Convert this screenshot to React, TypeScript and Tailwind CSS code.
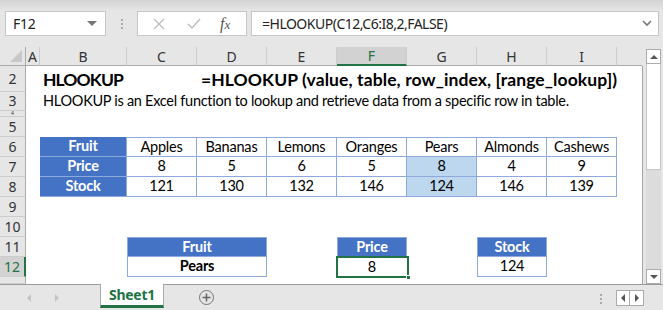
import React from "react";

const cal = "font-['Lato',sans-serif]";
const ui = "font-['Noto_Sans',sans-serif]";

type CellProps = {
  pos: string;
  kind?: "head" | "data" | "hl" | "bold";
  top?: boolean;
  left?: boolean;
  children?: React.ReactNode;
};

function Cell({ pos, kind = "data", top, left, children }: CellProps) {
  const tone =
    kind === "head"
      ? "bg-[#4472c4] text-white font-bold"
      : kind === "hl"
        ? "bg-[#bdd7ee] text-black"
        : kind === "bold"
          ? "bg-white text-black font-bold"
          : "bg-white text-black";
  return (
    <div
      className={`${pos} ${tone} ${top ? "border-t" : ""} ${left ? "border-l" : ""} flex items-center justify-center border-r border-b border-[#8ea9db] text-[14.5px] tracking-[-0.2px] leading-none ${cal}`}
    >
      {children}
    </div>
  );
}

function ColHead({ label, active, last }: { label: string; active?: boolean; last?: boolean }) {
  return (
    <div
      className={`flex items-center justify-center text-[14px] ${ui} ${last ? "" : "border-r border-r-[#cdcdcd]"} ${
        active
          ? "bg-[#d2d2d2] text-[#217346] border-b-2 border-b-[#217346]"
          : "bg-[#e6e6e6] text-[#333] border-b border-b-[#ababab]"
      }`}
    >
      {label}
    </div>
  );
}

function RowHead({ pos, label, active, size = "text-[14px] leading-none" }: { pos: string; label: string; active?: boolean; size?: string }) {
  return (
    <div
      className={`${pos} col-start-1 flex items-center justify-center overflow-hidden ${size} ${ui} border-b border-b-[#cdcdcd] ${
        active
          ? "bg-[#d2d2d2] text-[#217346] border-r-2 border-r-[#217346]"
          : "bg-[#e6e6e6] text-[#333] border-r border-r-[#ababab]"
      }`}
    >
      {label}
    </div>
  );
}

const fruits = ["Apples", "Bananas", "Lemons", "Oranges", "Pears", "Almonds", "Cashews"];
const prices = ["8", "5", "6", "5", "8", "4", "9"];
const stock = ["121", "130", "132", "146", "124", "146", "139"];
const colPos = ["col-start-4", "col-start-5", "col-start-6", "col-start-7", "col-start-8", "col-start-9", "col-start-10"];

export default function App() {
  return (
    <div className={`w-[663px] h-[310px] overflow-hidden bg-[#e6e6e6] flex flex-col ${ui}`}>
      {/* formula bar */}
      <div className="h-[47px] flex flex-col">
        <div className="h-[11px] bg-linear-to-b from-[#d3d3d3] to-[#e6e6e6]" />
        <div className="flex h-[25px] items-stretch">
          <div className="ml-[5px] w-[101px] bg-white border border-[#c6c6c6] flex items-center justify-between pl-[7px] pr-[8px]">
            <span className="text-[14px] tracking-[-0.3px] text-[#222]">F12</span>
            <span className="w-0 h-0 border-l-[5px] border-r-[5px] border-t-[5px] border-l-transparent border-r-transparent border-t-[#777]" />
          </div>
          <div className="w-[31px] flex flex-col items-center justify-center gap-[2px]">
            <span className="w-[2px] h-[2px] bg-[#aaa]" />
            <span className="w-[2px] h-[2px] bg-[#aaa]" />
            <span className="w-[2px] h-[2px] bg-[#aaa]" />
          </div>
          <div className="w-[110px] bg-white border border-[#c6c6c6] flex items-center">
            <svg width="12" height="12" viewBox="0 0 12 12" className="ml-[15px]">
              <path d="M1 1 L11 11 M11 1 L1 11" stroke="#bdbdbd" strokeWidth="1.3" fill="none" />
            </svg>
            <svg width="14" height="12" viewBox="0 0 14 12" className="ml-[22px]">
              <path d="M1 6 L5 10 L13 1" stroke="#bdbdbd" strokeWidth="1.5" fill="none" />
            </svg>
            <span className="ml-[19px] text-[16px] italic text-[#555] font-['Liberation_Serif',serif] leading-none">
              f<span className="text-[13px]">x</span>
            </span>
          </div>
          <div className="ml-[4px] w-[408px] bg-white border border-[#c6c6c6] flex items-center justify-between pl-[10px] pr-[6px]">
            <span className="text-[14px] tracking-[-0.5px] text-[#222]">=HLOOKUP(C12,C6:I8,2,FALSE)</span>
            <svg width="10" height="7" viewBox="0 0 10 7">
              <path d="M1 1 L5 5 L9 1" stroke="#777" strokeWidth="1.6" fill="none" />
            </svg>
          </div>
        </div>
      </div>

      {/* sheet */}
      <div className="flex h-[237px]">
        <div className="w-[643px] grid grid-cols-[26px_14px_87px_repeat(7,70px)_25px_1px] grid-rows-[19px_26px_19px_6px_20px_repeat(7,20px)_7px] bg-white">
          <div className="bg-[#e6e6e6] border-r border-b border-[#ababab] flex items-end justify-end p-[3px]">
            <span className="w-0 h-0 [border-bottom:12px_solid_#c8c8c8] [border-left:12px_solid_transparent]" />
          </div>
          <ColHead label="A" />
          <ColHead label="B" />
          <ColHead label="C" />
          <ColHead label="D" />
          <ColHead label="E" />
          <ColHead label="F" active />
          <ColHead label="G" />
          <ColHead label="H" />
          <ColHead label="I" />
          <ColHead label="" last />
          <div className="bg-[#e6e6e6]" />

          <RowHead pos="row-start-2" label="2" />
          <RowHead pos="row-start-3" label="3" />
          <RowHead pos="row-start-4" label="4" size="text-[5px] leading-[5px]" />
          <RowHead pos="row-start-5" label="5" />
          <RowHead pos="row-start-6" label="6" />
          <RowHead pos="row-start-7" label="7" />
          <RowHead pos="row-start-8" label="8" />
          <RowHead pos="row-start-9" label="9" />
          <RowHead pos="row-start-10" label="10" />
          <RowHead pos="row-start-11" label="11" />
          <RowHead pos="row-start-12" label="12" active />
          <RowHead pos="row-start-13" label="" />
          <div className="col-start-12 row-start-2 row-span-12 bg-[#a6a6a6]" />

          {/* title rows */}
          <div className={`row-start-2 col-start-3 flex items-end pl-[3px] pb-[4px] text-[17.5px] tracking-[-0.9px] font-bold leading-none text-black ${cal}`}>
            HLOOKUP
          </div>
          <div className={`row-start-2 col-start-5 col-span-7 flex items-end pl-[4px] pb-[4px] text-[17.5px] tracking-[0.1px] font-bold leading-none whitespace-nowrap text-black ${cal}`}>
            =HLOOKUP (value, table, row_index, [range_lookup])
          </div>
          <div className={`row-start-3 col-start-3 col-span-8 flex items-end pl-[3px] pb-[3px] text-[14.5px] tracking-[-0.28px] leading-none whitespace-nowrap text-black ${cal}`}>
            HLOOKUP is an Excel function to lookup and retrieve data from a specific row in table.
          </div>

          {/* main table */}
          <Cell pos="row-start-6 col-start-3" kind="head">Fruit</Cell>
          <Cell pos="row-start-7 col-start-3" kind="head">Price</Cell>
          <Cell pos="row-start-8 col-start-3" kind="head">Stock</Cell>
          {fruits.map((f, i) => (
            <Cell key={f} pos={`row-start-6 ${colPos[i]}`} top>
              {f}
            </Cell>
          ))}
          {prices.map((p, i) => (
            <Cell key={"p" + i} pos={`row-start-7 ${colPos[i]}`} kind={i === 4 ? "hl" : "data"}>
              {p}
            </Cell>
          ))}
          {stock.map((s, i) => (
            <Cell key={"s" + i} pos={`row-start-8 ${colPos[i]}`} kind={i === 4 ? "hl" : "data"}>
              {s}
            </Cell>
          ))}

          {/* lookup result tables */}
          <Cell pos="row-start-11 col-start-4 col-span-2" kind="head" left top>Fruit</Cell>
          <Cell pos="row-start-12 col-start-4 col-span-2" kind="bold" left>Pears</Cell>
          <Cell pos="row-start-11 col-start-7" kind="head" left top>Price</Cell>
          <div className={`row-start-12 col-start-7 relative flex items-center justify-center text-[14.5px] leading-none text-black ${cal}`}>
            8
            <div className="absolute -left-px -top-px right-[-2px] bottom-[-1px] border-2 border-[#217346]" />
            <div className="absolute right-[-4px] bottom-[-3px] w-[5px] h-[5px] bg-[#217346] border border-white" />
          </div>
          <Cell pos="row-start-11 col-start-9" kind="head" left top>Stock</Cell>
          <Cell pos="row-start-12 col-start-9" left>124</Cell>
        </div>

        {/* vertical scrollbar */}
        <div className="ml-[3px] w-[15px] pt-[2px] flex flex-col">
          <div className="h-[15px] bg-white border border-[#ababab] flex items-center justify-center">
            <span className="w-0 h-0 border-l-[4px] border-r-[4px] border-b-[4px] border-l-transparent border-r-transparent border-b-[#555]" />
          </div>
          <div className="h-[106px] bg-white border-x border-b border-[#c6c6c6]" />
          <div className="flex-1 bg-[#dcdcdc]" />
          <div className="h-[15px] bg-white border border-[#ababab] flex items-center justify-center">
            <span className="w-0 h-0 border-l-[4px] border-r-[4px] border-t-[4px] border-l-transparent border-r-transparent border-t-[#555]" />
          </div>
        </div>
      </div>

      {/* sheet tabs */}
      <div className="h-[26px] flex items-start">
        <div className="w-[100px] h-full border-t border-[#9b9b9b] flex items-center">
          <span className="ml-[27px] w-0 h-0 border-t-[4px] border-b-[4px] border-r-[4px] border-t-transparent border-b-transparent border-r-[#c4c4c4]" />
          <span className="ml-[24px] w-0 h-0 border-t-[4px] border-b-[4px] border-l-[4px] border-t-transparent border-b-transparent border-l-[#c4c4c4]" />
        </div>
        <div className="w-[64px] h-[24px] bg-white border-x border-[#ababab] border-b-[3px] border-b-[#217346] flex items-center justify-center text-[14px] tracking-[-0.3px] font-bold text-[#217346]">
          Sheet1
        </div>
        <div className="flex-1 h-full border-t border-[#9b9b9b] flex items-start">
          <div className="ml-[35px] mt-[5px] w-[15px] h-[15px] rounded-full border border-[#777] flex items-center justify-center">
            <svg width="9" height="9" viewBox="0 0 9 9">
              <path d="M4.5 0.5 V8.5 M0.5 4.5 H8.5" stroke="#666" strokeWidth="1.5" />
            </svg>
          </div>
          <div className="ml-[386px] mt-[9px] flex flex-col gap-[2px]">
            <span className="w-[2px] h-[2px] bg-[#aaa]" />
            <span className="w-[2px] h-[2px] bg-[#aaa]" />
            <span className="w-[2px] h-[2px] bg-[#aaa]" />
          </div>
          <div className="ml-[14px] mt-[5px] h-[16px] flex">
            <div className="w-[14px] h-full bg-white border border-[#ababab] flex items-center justify-center">
              <span className="w-0 h-0 border-t-[4px] border-b-[4px] border-r-[4px] border-t-transparent border-b-transparent border-r-[#555]" />
            </div>
            <div className="w-[14px] h-full bg-white border border-l-0 border-[#ababab] flex items-center justify-center">
              <span className="w-0 h-0 border-t-[4px] border-b-[4px] border-l-[4px] border-t-transparent border-b-transparent border-l-[#555]" />
            </div>
          </div>
        </div>
      </div>
    </div>
  );
}
